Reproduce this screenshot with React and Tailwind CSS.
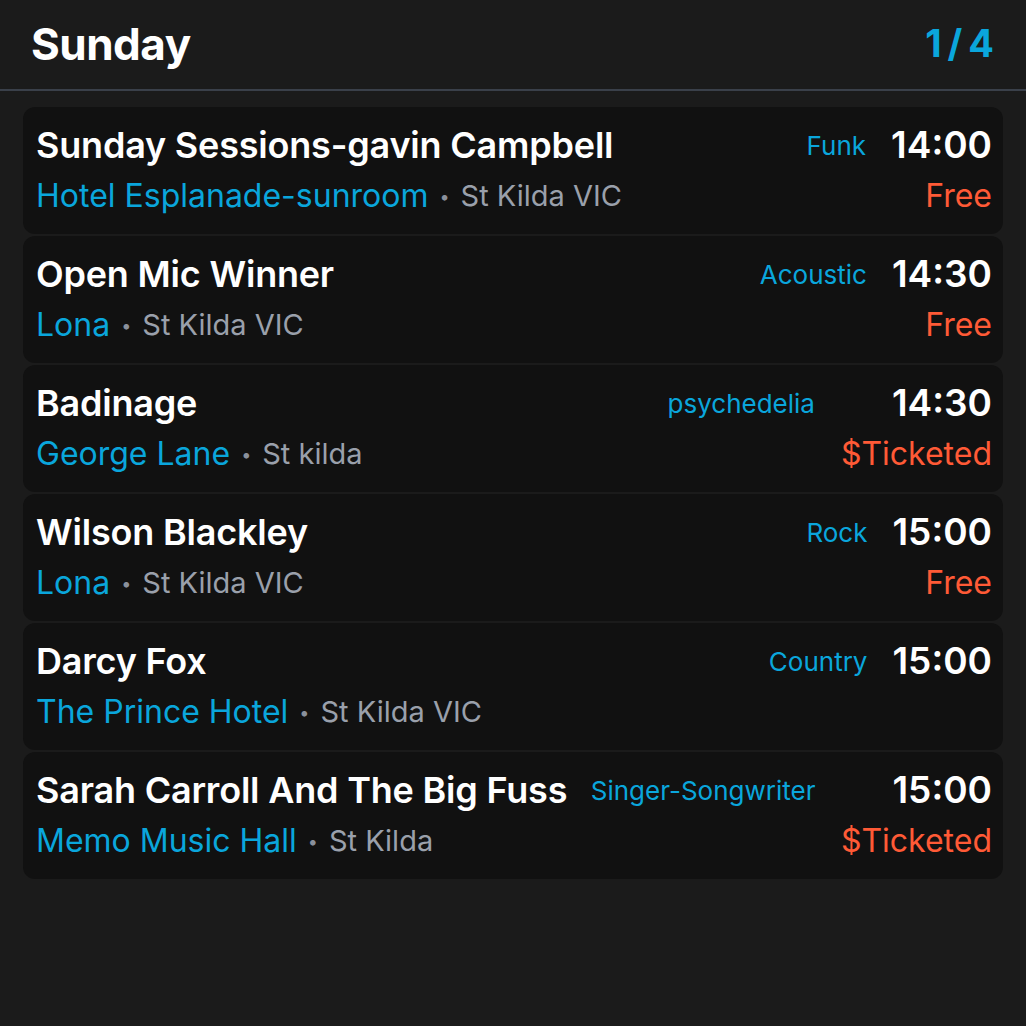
const gigs = [
  { title: "Sunday Sessions-gavin Campbell", genre: "Funk", time: "14:00", venue: "Hotel Esplanade-sunroom", place: "St Kilda VIC", price: "Free" },
  { title: "Open Mic Winner", genre: "Acoustic", time: "14:30", venue: "Lona", place: "St Kilda VIC", price: "Free" },
  { title: "Badinage", genre: "psychedelia", time: "14:30", venue: "George Lane", place: "St kilda", price: "$Ticketed", wide: true },
  { title: "Wilson Blackley", genre: "Rock", time: "15:00", venue: "Lona", place: "St Kilda VIC", price: "Free" },
  { title: "Darcy Fox", genre: "Country", time: "15:00", venue: "The Prince Hotel", place: "St Kilda VIC", price: "" },
  { title: "Sarah Carroll And The Big Fuss", genre: "Singer-Songwriter", time: "15:00", venue: "Memo Music Hall", place: "St Kilda", price: "$Ticketed", wide: true },
];

function GigCard({ gig }) {
  return (
    <div className="h-[127px] rounded-xl bg-[#111111] pl-[13px] pr-[11px] pt-[17px] flex flex-col">
      <div className="flex items-center h-[42px]">
        <div className="flex-1 text-white font-semibold text-[36px] tracking-[-0.2px] whitespace-nowrap">{gig.title}</div>
        <div className={"text-[#0aa6dc] text-[26px] " + (gig.wide ? "mr-[77px]" : "mr-[25px]")}>{gig.genre}</div>
        <div className="text-white font-semibold text-[37px]">{gig.time}</div>
      </div>
      <div className="flex items-center h-[42px] mt-[9px]">
        <div className="flex-1 flex items-center whitespace-nowrap">
          <span className="text-[#0aa6dc] text-[32px]">{gig.venue}</span>
          <span className="text-[#8a909b] text-[18px] mx-[11px]">•</span>
          <span className="text-[#9aa0ab] text-[29px]">{gig.place}</span>
        </div>
        <div className="text-[#ff5a36] text-[32px]">{gig.price}</div>
      </div>
    </div>
  );
}

export default function App() {
  return (
    <div className="w-[1026px] h-[1026px] bg-[#1b1b1b] overflow-hidden" style={{ fontFamily: "Inter, 'Noto Sans', sans-serif" }}>
      <div className="h-[91px] flex items-center justify-between pl-[31px] pr-[26px] pb-[2px] border-b-2 border-[#3a404a]">
        <div className="text-white font-bold text-[44px] tracking-[-0.5px]">Sunday</div>
        <div className="text-[#0aa6dc] font-bold text-[38px] tracking-[6px]">1/4</div>
      </div>
      <div className="flex flex-col gap-[2px] px-[23px] pt-[16px]">
        {gigs.map((g, i) => (
          <GigCard key={i} gig={g} />
        ))}
      </div>
    </div>
  );
}
